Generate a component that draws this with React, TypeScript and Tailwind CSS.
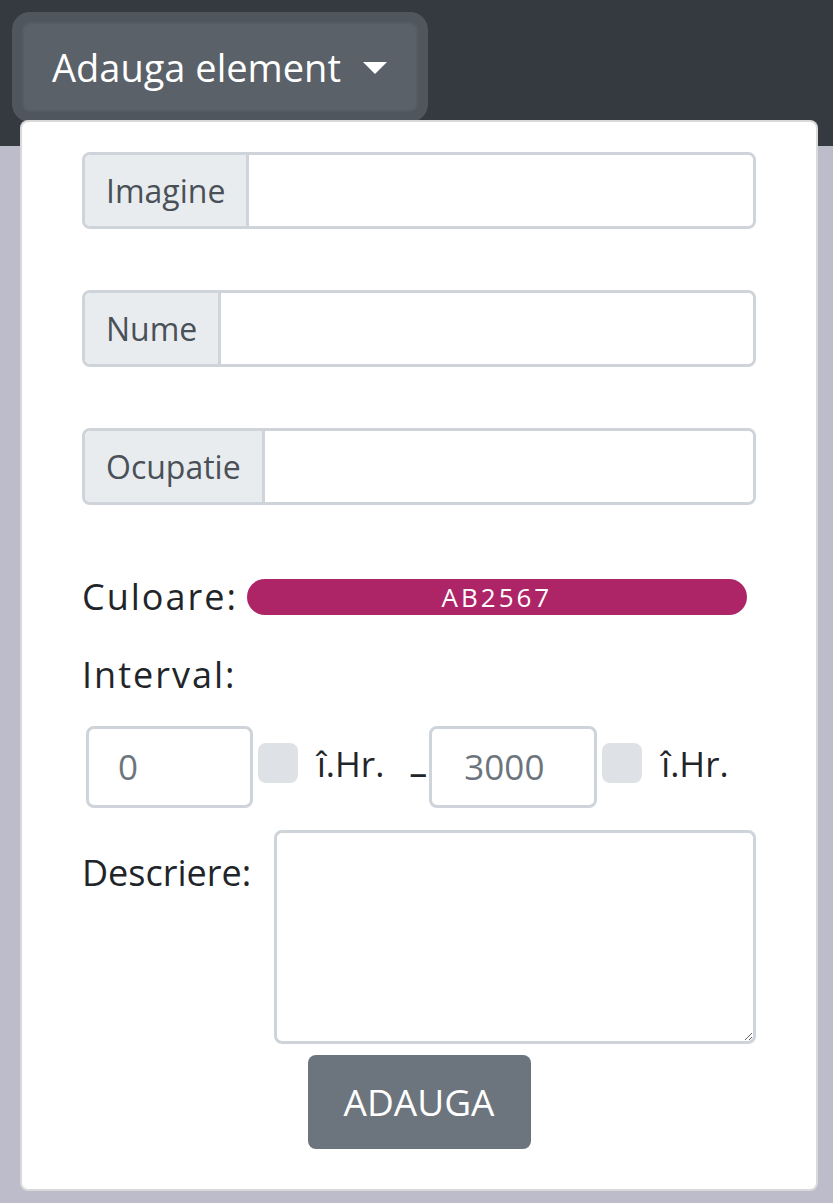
export default function App() {
  return (
    <div className="relative h-[1203px] overflow-hidden bg-[#bdbccb] font-['Open_Sans',sans-serif]">
      {/* Navbar */}
      <nav className="h-[146px] bg-[#343a40] p-[22px]">
        <button className="flex h-[90px] w-[396px] items-center rounded-[8px] border-2 border-[#545b62] bg-[#5a6168] pl-[28px] text-[38px] text-white shadow-[0_0_0_10px_#50565d]">
          <span className="leading-none">Adauga element</span>
          <span className="ml-[22px] mt-[2px] h-0 w-0 border-x-[12px] border-t-[12px] border-x-transparent border-t-white" />
        </button>
      </nav>

      {/* Dropdown menu */}
      <div className="absolute left-[20px] top-[120px] w-[798px] rounded-[8px] border-2 border-black/15 bg-white px-[60px] pb-[40px] pt-[30px]">
        {["Imagine", "Nume", "Ocupatie"].map((label, i) => (
          <div
            key={label}
            className={`flex h-[77px] overflow-hidden rounded-[8px] border-[3px] border-[#ced4da] ${i > 0 ? "mt-[61px]" : ""}`}
          >
            <span className="flex items-center border-r-[3px] border-[#ced4da] bg-[#e9ecef] px-[21px] text-[32px] text-[#495057]">
              {label}
            </span>
            <input className="flex-1 bg-white outline-none" />
          </div>
        ))}

        {/* Culoare */}
        <div className="mt-[74px] flex items-center">
          <span className="text-[36px] leading-none tracking-[2px] text-[#212529]">Culoare:</span>
          <span className="ml-[9px] flex h-[36px] w-[500px] items-center justify-center rounded-full bg-[#ad2567] text-[26px] tracking-[3px] text-white">
            AB2567
          </span>
        </div>

        {/* Interval */}
        <div className="mt-[38px] text-[36px] leading-[44px] tracking-[2px] text-[#212529]">Interval:</div>

        <div className="mt-[29px] flex items-center pl-[4px]">
          <div className="flex h-[82px] w-[167px] items-center rounded-[8px] border-[3px] border-[#ced4da] pl-[29px] text-[35px] text-[#6c757d]">
            0
          </div>
          <span className="ml-[5px] h-[40px] w-[40px] -translate-y-[4px] rounded-[8px] bg-[#dee2e6]" />
          <span className="ml-[19px] -translate-y-[3px] text-[35px] text-[#212529]">î.Hr.</span>
          <span className="ml-[25px] translate-y-[6px] text-[36px] text-[#212529]">–</span>
          <div className="ml-[2px] flex h-[82px] w-[168px] items-center rounded-[8px] border-[3px] border-[#ced4da] pl-[32px] text-[35px] text-[#6c757d]">
            3000
          </div>
          <span className="ml-[5px] h-[40px] w-[40px] -translate-y-[4px] rounded-[8px] bg-[#dee2e6]" />
          <span className="ml-[19px] -translate-y-[3px] text-[35px] text-[#212529]">î.Hr.</span>
        </div>

        {/* Descriere */}
        <div className="mt-[22px] flex items-start justify-between">
          <span className="mt-[16px] text-[36px] text-[#212529]">Descriere:</span>
          <textarea className="h-[214px] w-[482px] resize-y rounded-[8px] border-[3px] border-[#ced4da] outline-none" />
        </div>

        <div className="mt-[11px] flex justify-center">
          <button className="h-[94px] w-[223px] rounded-[8px] bg-[#6c757d] text-[37px] text-white">ADAUGA</button>
        </div>
      </div>
    </div>
  );
}
